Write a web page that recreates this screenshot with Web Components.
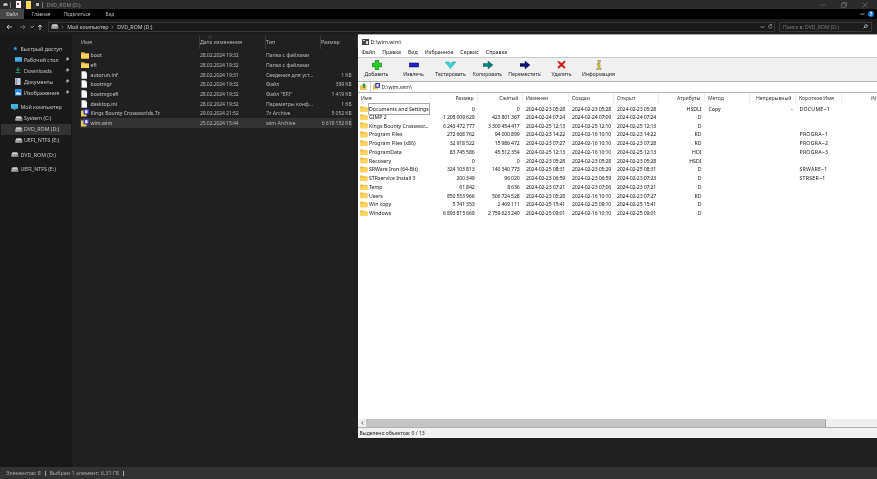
<!DOCTYPE html>
<html lang="ru"><head><meta charset="utf-8"><title>DVD_ROM</title>
<style>
html,body{margin:0;padding:0;background:#202020;overflow:hidden}
body{width:877px;height:479px;font-family:"Noto Sans","Open Sans",sans-serif}
</style></head><body>
<explorer-app>
  <explorer-titlebar slot="title"></explorer-titlebar>
  <explorer-ribbon slot="ribbon"></explorer-ribbon>
  <explorer-address slot="address"></explorer-address>
  <explorer-nav slot="nav"></explorer-nav>
  <explorer-list slot="list"></explorer-list>
  <explorer-status slot="status"></explorer-status>
  <zip-window slot="window"></zip-window>
</explorer-app>
<script>
const ICON={
 folder:'<svg viewBox="0 0 16 13" width="8" height="6.5"><path d="M0 1.5Q0 .5 1 .5H6L8 2.5H15Q16 2.5 16 3.5V12Q16 13 15 13H1Q0 13 0 12Z" fill="#f0b93a"/><path d="M0 4.5H16V12Q16 13 15 13H1Q0 13 0 12Z" fill="#fcd462"/></svg>',
 file:'<svg viewBox="0 0 12 15" width="6.4" height="8"><path d="M1 .5H8L11.5 4V14.5H1Z" fill="#fafafa" stroke="#9a9a9a" stroke-width=".6"/><path d="M8 .5V4H11.5" fill="#ddd" stroke="#9a9a9a" stroke-width=".5"/></svg>',
 arch:'<svg viewBox="0 0 16 16" width="8" height="8"><rect x="0" y="3" width="11" height="12" fill="#e8cf5a"/><rect x="5" y="0" width="11" height="11" fill="#3d3fb6"/><rect x="8" y="2.5" width="5" height="6" fill="#e9e9ff"/></svg>',
 drive:'<svg viewBox="0 0 16 10" width="7.6" height="5"><path d="M3 .5H13L15.5 5.5H.5Z" fill="#cfcfcf"/><rect x=".5" y="5.5" width="15" height="4" rx=".8" fill="#a8a8a8"/><rect x="11" y="6.8" width="3" height="1.2" fill="#555"/></svg>',
 pin:'<svg viewBox="0 0 10 10" width="4.5" height="4.5"><path d="M5.5 .8L9.2 4.5L7.8 5L6 7.6L2.4 4L5 2.2ZM3.5 6.5L1 9" fill="#b5b5b5" stroke="#b5b5b5"/></svg>',
 star:'<svg viewBox="0 0 10 10" width="4.6" height="4.6"><path d="M5 .3L6.4 3.6L9.8 3.9L7.2 6.2L8 9.7L5 7.8L2 9.7L2.8 6.2L.2 3.9L3.6 3.6Z" fill="#3a9be8"/></svg>',
 desk:'<svg viewBox="0 0 14 10" width="7" height="5.4"><rect width="14" height="10" fill="#4db0e6"/><rect y="7" width="14" height="3" fill="#2a83c4"/></svg>',
 dl:'<svg viewBox="0 0 10 10" width="6" height="6.4"><path d="M5 0V6M2 3.6L5 6.6L8 3.6" fill="none" stroke="#38b48b" stroke-width="1.4"/><path d="M1 9H9" stroke="#38b48b" stroke-width="1.4"/></svg>',
 docs:'<svg viewBox="0 0 10 13" width="5.6" height="7.4"><rect width="10" height="13" fill="#c5d0dc"/><rect x="1" y="1" width="3" height="11" fill="#7f93ad"/></svg>',
 pics:'<svg viewBox="0 0 12 12" width="6.6" height="6.6"><rect width="12" height="12" fill="#2e8fe0"/><path d="M1 10L4.5 5L7 8L9 6L11 10Z" fill="#fff"/></svg>',
 pc:'<svg viewBox="0 0 14 13" width="7" height="6.5"><rect width="14" height="9.5" fill="#44b3da"/><rect x="5.5" y="9.5" width="3" height="2" fill="#9ab"/><rect x="3" y="11.5" width="8" height="1.5" fill="#9ab"/></svg>'
};
function mk(name,html){
  customElements.define(name,class extends HTMLElement{
    connectedCallback(){
      if(this.shadowRoot)return;
      const s=this.attachShadow({mode:'open'});
      s.innerHTML=typeof html==='function'?html(this):html;
    }
  });
}
mk('explorer-app',`<style>
:host{display:flex;flex-direction:column;position:relative;width:877px;height:479px;overflow:hidden;background:#202020;filter:blur(.25px)}
.body{flex:1;display:flex;min-height:0}
::slotted([slot=window]){position:absolute;left:358px;top:34px}
</style><slot name="title"></slot><slot name="ribbon"></slot><slot name="address"></slot>
<div class="body"><slot name="nav"></slot><slot name="list"></slot></div><slot name="status"></slot><slot name="window"></slot>`);

mk('explorer-titlebar',`<style>
:host{display:flex;align-items:center;height:9px;background:#2b2b2b;color:#8f8f8f;font-size:5.1px;padding-left:3px}
.d svg{width:5px;height:3.5px}
.sep{width:1px;height:6px;background:#777;margin:0 5px 0 2px;flex:none}
.note{width:4.6px;height:7px;background:#fbfbfb;display:block;margin:0 5px 0 0;flex:none}
.note i{display:block;width:2px;height:2px;background:#d33;margin-left:1.4px;transform:translateY(2px)}
.fold{width:5.5px;height:8px;background:#fbd560;margin-right:5px;flex:none}
.arr{width:2.5px;height:2.5px;background:#bbb;margin-right:3px;flex:none}
.t{flex:1;margin-left:-1px}
.c{display:flex;gap:15px;padding-right:9px;align-items:center}
svg{display:block}
</style><span class="d">${ICON.drive}</span><span class="sep"></span><span class="note"><i></i></span><span class="fold"></span><span class="arr"></span><span class="sep" style="margin-left:0"></span><span class="t">DVD_ROM (D:)</span>
<span class="c"><svg width="6" height="6" viewBox="0 0 6 6"><path d="M0 3H6" stroke="#666" stroke-width=".6"/></svg>
<svg width="6" height="6" viewBox="0 0 6 6"><path d="M.5 1.7H4.3V5.5H.5ZM1.7 1.7V.5H5.5V4.3H4.3" fill="none" stroke="#777" stroke-width=".6"/></svg>
<svg width="6" height="6" viewBox="0 0 6 6"><path d="M.5 .5L5.5 5.5M5.5 .5L.5 5.5" stroke="#777" stroke-width=".6"/></svg></span>`);

mk('explorer-ribbon',`<style>
:host{display:flex;align-items:center;height:10px;background:#000;color:#b9b9b9;font-size:4.7px}
.f{width:24px;height:10px;background:#474747;display:flex;align-items:center;justify-content:center;color:#ccc}
.sp{flex:1}
.chev{margin-right:3px}
.h{width:6px;height:6px;border-radius:50%;background:#1f7fd8;color:#fff;font-size:4.5px;line-height:6px;text-align:center;margin-right:3px;font-weight:700}
</style><span class="f">Файл</span><span style="margin-left:8px">Главная</span><span style="margin-left:13px">Поделиться</span><span style="margin-left:15px">Вид</span><span class="sp"></span>
<svg class="chev" width="5" height="4" viewBox="0 0 5 4"><path d="M.6 1L2.5 3L4.4 1" fill="none" stroke="#ccc" stroke-width=".8"/></svg><span class="h">?</span>`);

mk('explorer-address',`<style>
:host{display:flex;align-items:center;height:15px;background:#1c1c1c;color:#c8c8c8;font-size:5.3px;box-sizing:border-box}
svg{display:block}
.nav{display:flex;align-items:center;padding-left:6px;width:48px;box-sizing:border-box;flex:none}
.box{width:727px;height:10px;border:1px solid #383838;box-sizing:border-box;background:#191919;display:flex;align-items:center;padding-left:2px;gap:2.8px}
.sp{flex:1}
.s{margin-left:4px;width:93px;height:10px;border:1px solid #383838;box-sizing:border-box;display:flex;align-items:center;padding:0 3px;color:#7d7d7d;justify-content:space-between;font-size:5.1px}
</style><div class="nav">
<svg width="6" height="6" viewBox="0 0 6 6"><path d="M6 3H1M3 1L1 3L3 5" fill="none" stroke="#e6e6e6" stroke-width=".8"/></svg>
<svg style="margin-left:8px" width="6" height="6" viewBox="0 0 6 6"><path d="M0 3H5M3 1L5 3L3 5" fill="none" stroke="#777" stroke-width=".8"/></svg>
<svg style="margin-left:4px" width="4" height="4" viewBox="0 0 4 4"><path d="M.4 1L2 2.8L3.6 1" fill="none" stroke="#aaa" stroke-width=".8"/></svg>
<svg style="margin-left:3px" width="6" height="6" viewBox="0 0 6 6"><path d="M3 6V1M1 3L3 1L5 3" fill="none" stroke="#e6e6e6" stroke-width=".8"/></svg>
</div><div class="box">${ICON.drive}
<svg width="3" height="4" viewBox="0 0 3 4"><path d="M.8 .5L2.2 2L.8 3.5" fill="none" stroke="#999" stroke-width=".6"/></svg><span>Мой компьютер</span>
<svg width="3" height="4" viewBox="0 0 3 4"><path d="M.8 .5L2.2 2L.8 3.5" fill="none" stroke="#999" stroke-width=".6"/></svg><span>DVD_ROM (D:)</span><span class="sp"></span>
<svg width="5" height="4" viewBox="0 0 5 4"><path d="M.6 1L2.5 3L4.4 1" fill="none" stroke="#bbb" stroke-width=".7"/></svg>
<svg style="margin:0 1px 0 0" width="5" height="5" viewBox="0 0 5 5"><path d="M4.2 2.5A1.8 1.8 0 1 1 3.4 1M3.4 0V1.4H2" fill="none" stroke="#bbb" stroke-width=".6"/></svg>
</div><div class="s"><span>Поиск в: DVD_ROM (D:)</span><svg width="5" height="5" viewBox="0 0 5 5"><circle cx="3" cy="2" r="1.4" fill="none" stroke="#ccc" stroke-width=".7"/><path d="M2 3L.5 4.5" stroke="#ccc" stroke-width=".8"/></svg></div>`);

mk('nav-item',el=>{
 const ind=+el.getAttribute('indent')||0, ic=ICON[el.getAttribute('icon')];
 return `<style>
:host{display:flex;align-items:center;height:11px;width:70px;margin-left:1px;box-sizing:border-box;color:#c4c4c4;font-size:5.3px;white-space:nowrap;position:relative;padding-left:${ind}px}
:host([sel]){background:#333}
.ic{width:${+el.getAttribute('iw')||9}px;display:flex;align-items:center;flex:none}
.pin{position:absolute;left:64px;top:3px;display:block}
svg{display:block}
</style><span class="ic">${ic}</span><slot></slot>${el.hasAttribute('pin')?`<span class="pin">${ICON.pin}</span>`:''}`});

mk('explorer-nav',`<style>
:host{display:block;width:72px;flex:none;background:#191919;padding-top:9px;box-sizing:border-box}
.g{height:3.5px}
</style>
<nav-item indent="11.5" iw="8" icon="star">Быстрый доступ</nav-item>
<nav-item indent="14" icon="desk" pin>Рабочий стол</nav-item>
<nav-item indent="14" icon="dl" pin>Downloads</nav-item>
<nav-item indent="14" icon="docs" pin>Документы</nav-item>
<nav-item indent="14" icon="pics" pin>Изображения</nav-item>
<div class="g"></div>
<nav-item indent="10" icon="pc" iw="9.5">Мой компьютер</nav-item>
<nav-item indent="14" icon="drive">System (C:)</nav-item>
<nav-item indent="14" icon="drive" sel>DVD_ROM (D:)</nav-item>
<nav-item indent="14" icon="drive">UEFI_NTFS (E:)</nav-item>
<div class="g"></div>
<nav-item indent="10" icon="drive" iw="9.5">DVD_ROM (D:)</nav-item>
<div class="g"></div>
<nav-item indent="10" icon="drive" iw="9.5">UEFI_NTFS (E:)</nav-item>`);

mk('file-row',el=>{const a=n=>el.getAttribute(n)||'';return `<style>
:host{display:grid;grid-template-columns:119px 66px 66px 19px;align-items:center;height:9.67px;width:272px;box-sizing:border-box;padding-left:1px;font-size:5.15px;color:#b8b8b8;white-space:nowrap}
:host([sel]){background:#333}
.n{display:flex;align-items:center;color:#c6c6c6}
.ic{width:9.5px;display:flex;flex:none}
.dt{letter-spacing:-.14px}
.z{justify-self:end;text-align:right;letter-spacing:-.1px;margin-right:-.5px}
svg{display:block}
</style><span class="n"><span class="ic">${ICON[a('icon')]}</span>${a('name')}</span><span class="dt">${a('date')}</span><span>${a('type')}</span><span class="z">${a('size')}</span>`});

mk('explorer-list',`<style>
:host{display:block;flex:1;background:#202020;padding-left:8px;position:relative;color:#b5b5b5;min-width:0}
.h{display:grid;grid-template-columns:119px 66px 55px 37px;height:16.5px;align-items:center;font-size:5.3px;width:277px;padding-left:1px;box-sizing:border-box}
.h span{display:flex;align-items:center;border-right:1px solid #3a3a3a;box-sizing:border-box;height:13px}
.a{position:absolute;left:136px;top:1.5px;width:4px;height:2px}
</style>
<svg class="a" viewBox="0 0 4 2"><path d="M.3 1.8L2 .3L3.7 1.8" fill="none" stroke="#888" stroke-width=".4"/></svg>
<div class="h"><span>Имя</span><span>Дата изменения</span><span>Тип</span><span>Размер</span></div>
<file-row icon="folder" name="boot" date="28.02.2024 19:32" type="Папка с файлами"></file-row>
<file-row icon="folder" name="efi" date="28.02.2024 19:32" type="Папка с файлами"></file-row>
<file-row icon="file" name="autorun.inf" date="28.02.2024 19:31" type="Сведения для уст..." size="1 КБ"></file-row>
<file-row icon="file" name="bootmgr" date="28.02.2024 19:32" type="Файл" size="399 КБ"></file-row>
<file-row icon="file" name="bootmgr.efi" date="28.02.2024 19:32" type="Файл &quot;EFI&quot;" size="1 419 КБ"></file-row>
<file-row icon="file" name="desktop.ini" date="28.02.2024 19:32" type="Параметры конф..." size="1 КБ"></file-row>
<file-row icon="arch" name="Kings Bounty Crossworlds.7z" date="29.02.2024 21:52" type="7z Archive" size="5 052 КБ"></file-row>
<file-row icon="arch" sel name="wim.wim" date="25.02.2024 15:44" type="wim Archive" size="6 619 152 КБ"></file-row>`);

mk('explorer-status',`<style>
:host{display:flex;align-items:center;height:12px;flex:none;background:#333;color:#a8a8a8;font-size:5.45px;padding-left:6px;gap:4px;white-space:nowrap}
i{width:.6px;height:5px;background:#aaa}
</style><span>Элементов: 8</span><i></i><span>Выбран 1 элемент: 6,31 ГБ</span><i></i>`);

const COLS='73px 47px 45px 46px 45px 45px 46px 45px 46px 46px 35px';
const SEP='#ececec';
mk('zip-tool',`<style>
:host{display:flex;flex-direction:column;align-items:center;width:37px;color:#1c1c1c;font-size:5.1px;white-space:nowrap}
.i{height:12.5px;display:flex;align-items:center;justify-content:center;margin-top:.5px}
svg{display:block}
</style><div class="i"><slot name="i"></slot></div><slot></slot>`);

mk('zip-row',el=>{const d=(el.getAttribute('d')||'').split('|');return `<style>
:host{display:grid;grid-template-columns:${COLS};align-items:center;height:8.75px;font-size:5.2px;color:#141414;white-space:nowrap;width:519px}
.c{padding:0 3.5px}
.r{text-align:right;letter-spacing:-.17px}
.a{letter-spacing:0}
.dt{letter-spacing:-.16px;padding-left:3px;padding-right:0}
.sn{letter-spacing:.25px}
.n{display:flex;align-items:center;padding-left:2px;padding-right:0}
.n svg{margin-right:1.5px;flex:none;display:block}
:host([focus]) .t{outline:.6px solid #aaa;padding:1px .5px;margin-left:-.5px}
</style><span class="c n">${ICON.folder.replace('width="8" height="6.5"','width="7.5" height="6.4"')}<span class="t">${d[0]}</span></span>
<span class="c r">${d[1]}</span><span class="c r">${d[2]}</span><span class="c dt">${d[3]}</span><span class="c dt">${d[4]}</span><span class="c dt">${d[5]}</span><span class="c r a">${d[6]}</span><span class="c">${d[7]||''}</span><span class="c r">${d[8]||''}</span><span class="c sn">${d[9]||''}</span><span></span>`});

const ROWS=[
'Documents and Settings|0|0|2024-02-23 05:28|2024-02-23 05:28|2024-02-23 05:28|HSDLI|Copy|-|DOCUME~1',
'GIMP 2|1 208 009 629|423 801 367|2024-02-24 07:24|2024-02-24 07:09|2024-02-24 07:24|D',
'Kings Bounty Crosswor...|6 243 472 777|3 300 454 417|2024-02-25 12:13|2024-02-25 12:10|2024-02-25 12:13|D',
'Program Files|272 668 762|94 000 899|2024-02-23 14:22|2024-02-16 10:10|2024-02-23 14:22|RD|||PROGRA~1',
'Program Files (x86)|32 918 522|15 986 472|2024-02-23 07:27|2024-02-16 10:10|2024-02-23 07:28|RD|||PROGRA~2',
'ProgramData|83 745 586|45 512 354|2024-02-25 12:13|2024-02-16 10:10|2024-02-25 12:13|HDI|||PROGRA~3',
'Recovery|0|0|2024-02-23 05:28|2024-02-23 05:28|2024-02-23 05:28|HSDI',
'SRWare Iron (64-Bit)|324 103 813|140 340 773|2024-02-25 08:31|2024-02-23 05:29|2024-02-25 08:31|D|||SRWARE~1',
'STRservice Install 3|200 349|96 020|2024-02-23 06:59|2024-02-23 06:59|2024-02-23 07:23|D|||STRSER~1',
'Temp|61 842|8 636|2024-02-23 07:21|2024-02-23 07:06|2024-02-23 07:21|D',
'Users|850 553 966|506 724 528|2024-02-23 05:28|2024-02-16 10:10|2024-02-23 07:27|RD',
'Win copy|5 741 353|2 469 111|2024-02-25 15:41|2024-02-25 09:10|2024-02-25 15:41|D',
'Windows|6 893 815 669|2 759 623 240|2024-02-25 09:01|2024-02-16 10:10|2024-02-25 09:01|D'];
const HEAD=[['Имя',0],['Размер',1],['Сжатый',1],['Изменен',0],['Создан',0],['Открыт',0],['Атрибуты',1],['Метод',0],['Непрерывный',1],['Короткое Имя',0],['iN',1]];

mk('zip-window',`<style>
:host{display:flex;flex-direction:column;width:519px;height:404px;background:#fff;color:#1c1c1c;font-size:5.2px;box-sizing:border-box;border-top:1px solid #aaa;overflow:hidden}
svg{display:block}
.t{height:11px;display:flex;align-items:center;padding-left:3.5px;gap:2px;margin-top:1px;flex:none}
.m{height:10px;display:flex;align-items:center;padding-left:3.5px;font-size:5.3px;flex:none}
.m span{margin-right:7px}
.tb{background:#f0f0f0;border-top:1px solid #c9c9c9;border-bottom:1px solid #b5b5b5;display:flex;height:22.5px;flex:none}
.ad{height:10px;display:flex;align-items:center;padding-left:2px;border-bottom:1px solid #b5b5b5;flex:none}
.ad .f{display:flex;align-items:center;margin-left:3px;flex:1;border-left:1px solid #ccc;height:10px;padding-left:1.5px;gap:2px;font-size:5.1px}
.hd{display:grid;grid-template-columns:${COLS};height:11.5px;align-items:center;font-size:5.1px;color:#333;flex:none;white-space:nowrap}
.hd span{padding:0 3.5px 0 3px;border-right:1px solid ${SEP};height:10px;line-height:10px;box-sizing:border-box}
.hd span:last-child{border:none;padding-right:1px}
.hd .r{text-align:right}
.ls{flex:1 1 0;min-height:0;margin-top:-.3px}
.sb{height:8px;background:#f0f0f0;display:flex;align-items:center;flex:none;padding-left:2.5px}
.th{width:459px;height:8px;background:#c4c4c4;margin-left:2px;border-right:1px solid #a8a8a8;flex:none}
.st{height:10.5px;background:#f0f0f0;border-top:1px solid #b0b0b0;display:flex;align-items:center;padding-left:1.5px;flex:none;font-size:5.1px;color:#1c1c1c}
</style>
<div class="t"><svg width="7" height="6" viewBox="0 0 7 6"><rect width="7" height="6" fill="#444"/><rect x="1" y="1" width="2" height="1" fill="#ddd"/><rect x="4" y="2" width="2" height="3" fill="#ddd"/></svg><span>D:\\wim.wim\\</span></div>
<div class="m"><span>Файл</span><span>Правка</span><span>Вид</span><span>Избранное</span><span>Сервис</span><span>Справка</span></div>
<div class="tb">
<zip-tool>Добавить<svg slot="i" width="10" height="10" viewBox="0 0 10 10"><path d="M3.3 0H6.7V3.3H10V6.7H6.7V10H3.3V6.7H0V3.3H3.3Z" fill="#22d322" stroke="#0a5a0a" stroke-width=".5"/></svg></zip-tool>
<zip-tool>Извлечь<svg slot="i" width="10" height="6" viewBox="0 0 10 6"><rect x=".3" y="1" width="9.4" height="4" fill="#2222c8" stroke="#0c0c5a" stroke-width=".5"/></svg></zip-tool>
<zip-tool>Тестировать<svg slot="i" width="11" height="8" viewBox="0 0 11 8"><path d="M0 1H4L5.5 3.2L7 1H11L5.5 7.5Z" fill="#39d6d6" stroke="#1a8c8c" stroke-width=".4"/></svg></zip-tool>
<zip-tool>Копировать<svg slot="i" width="10" height="8" viewBox="0 0 10 8"><path d="M0 2.5H5V0L10 4L5 8V5.5H0Z" fill="#0b7e7e" stroke="#094848" stroke-width=".4"/></svg></zip-tool>
<zip-tool>Переместить<svg slot="i" width="10" height="8" viewBox="0 0 10 8"><path d="M0 2.5H5V0L10 4L5 8V5.5H0Z" fill="#11117a" stroke="#07073f" stroke-width=".4"/></svg></zip-tool>
<zip-tool>Удалить<svg slot="i" width="9" height="9" viewBox="0 0 9 9"><path d="M1.5 1L4.5 3.2L7.5 .8L8.4 2L5.8 4.5L8.4 7.5L7.2 8.5L4.5 6L1.7 8.4L.6 7.2L3.2 4.5L.6 2Z" fill="#e01515" stroke="#7a0a0a" stroke-width=".3"/></svg></zip-tool>
<zip-tool>Информация<svg slot="i" width="6" height="10" viewBox="0 0 6 10"><rect x="2" y="0" width="2.2" height="2.2" fill="#d8c438" stroke="#555" stroke-width=".4"/><path d="M1 3.5H4V8.5H5.2V9.8H.8V8.5H2V4.8H1Z" fill="#e4d23e" stroke="#555" stroke-width=".4"/></svg></zip-tool>
</div>
<div class="ad"><svg width="7" height="7" viewBox="0 0 7 7"><path d="M0 2.5H6.5V7H0Z" fill="#f2c94e"/><path d="M4 0L6.5 2.6H5V5H3V2.6H1.5Z" fill="#3f9f3f"/></svg>
<div class="f"><svg width="7" height="7" viewBox="0 0 16 16"><rect x="0" y="3" width="11" height="12" fill="#e8cf5a"/><rect x="5" y="0" width="11" height="11" fill="#3d3fb6"/><rect x="8" y="2.5" width="5" height="6" fill="#e9e9ff"/></svg><span>D:\\wim.wim\\</span></div></div>
<div class="hd">${HEAD.map(h=>`<span class="${h[1]?'r':''}">${h[0]}</span>`).join('')}</div>
<div class="ls">${ROWS.map((r,i)=>`<zip-row ${i?'':'focus'} d="${r}"></zip-row>`).join('')}</div>
<div class="sb"><svg width="3" height="4" viewBox="0 0 3 4"><path d="M2.2 .4L.7 2L2.2 3.6" fill="none" stroke="#333" stroke-width=".7"/></svg><div class="th"></div></div>
<div class="st">Выделено объектов: 0 / 13</div>`);
</script>
</body></html>
